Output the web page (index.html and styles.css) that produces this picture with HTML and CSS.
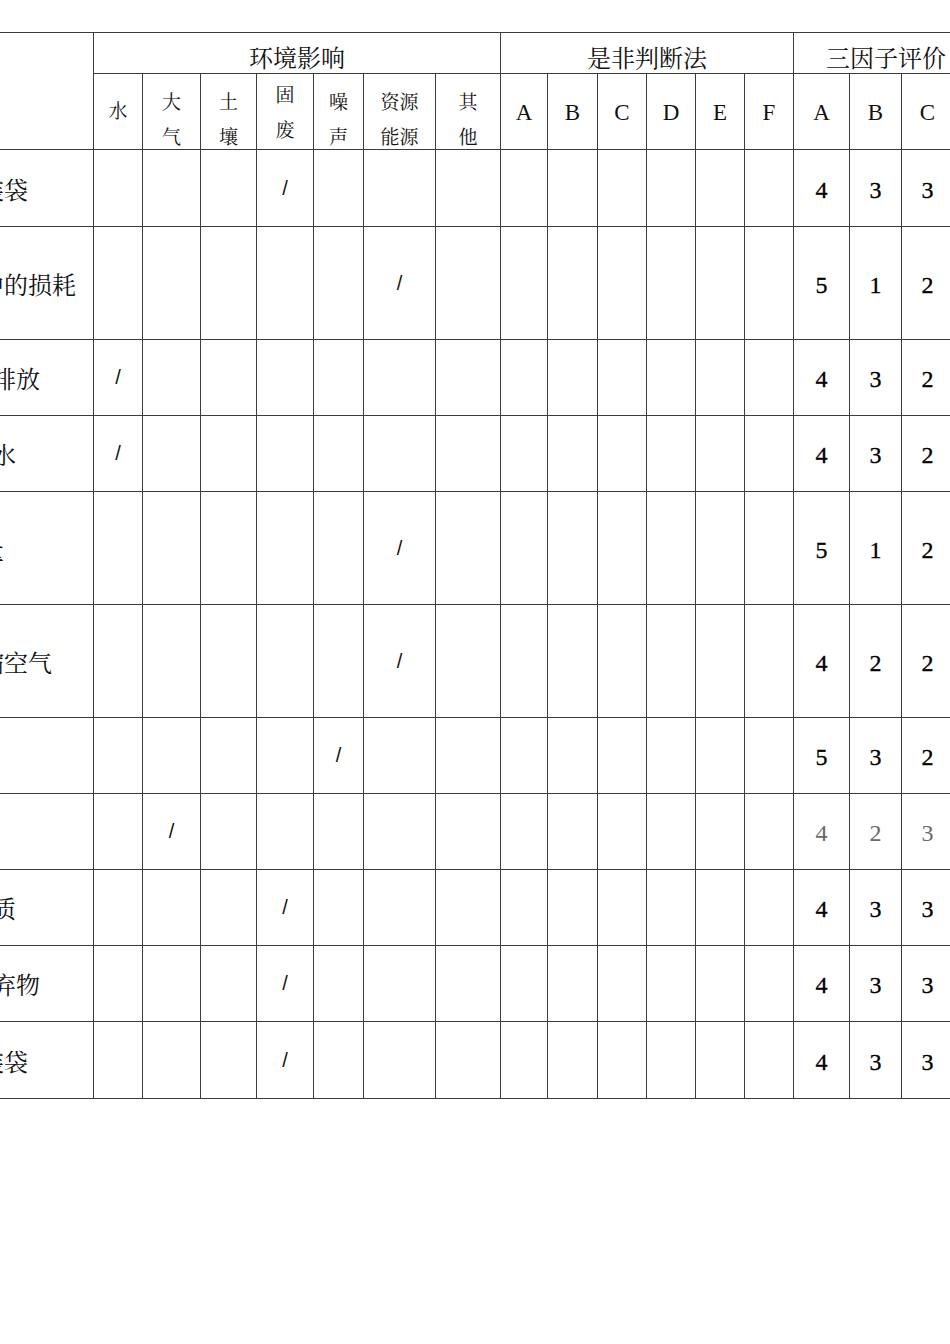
FILE: index.html
```html
<!DOCTYPE html>
<html lang="zh-CN">
<head>
<meta charset="utf-8">
<title>环境因素评价表</title>
<link rel="stylesheet" href="styles.css">
</head>
<body>
<div class="page">
  <div class="sheet">
    <div class="c corner"></div>
    <div class="c h1 span-env">环境影响</div>
    <div class="c h1 span-yn">是非判断法</div>
    <div class="c h1 span-tri">三因子评价</div>

    <div class="c h2">水</div>
    <div class="c h2 two">大<br>气</div>
    <div class="c h2 two">土<br>壤</div>
    <div class="c h2 two up">固<br>废</div>
    <div class="c h2 two">噪<br>声</div>
    <div class="c h2 two">资源<br>能源</div>
    <div class="c h2 two">其<br>他</div>
    <div class="c h2 lat">A</div>
    <div class="c h2 lat">B</div>
    <div class="c h2 lat">C</div>
    <div class="c h2 lat">D</div>
    <div class="c h2 lat">E</div>
    <div class="c h2 lat">F</div>
    <div class="c h2 lat">A</div>
    <div class="c h2 lat">B</div>
    <div class="c h2 lat">C</div>
    <div class="c h2"></div>

    <!-- row 1 -->
    <div class="c name">塑料包装袋</div>
    <div class="c"></div><div class="c"></div><div class="c"></div><div class="c mk">/</div><div class="c"></div><div class="c"></div><div class="c"></div>
    <div class="c"></div><div class="c"></div><div class="c"></div><div class="c"></div><div class="c"></div><div class="c"></div>
    <div class="c num">4</div><div class="c num">3</div><div class="c num">3</div><div class="c"></div>

    <!-- row 2 -->
    <div class="c name">原材料运输中的损耗</div>
    <div class="c"></div><div class="c"></div><div class="c"></div><div class="c"></div><div class="c"></div><div class="c mk">/</div><div class="c"></div>
    <div class="c"></div><div class="c"></div><div class="c"></div><div class="c"></div><div class="c"></div><div class="c"></div>
    <div class="c num">5</div><div class="c num">1</div><div class="c num">2</div><div class="c"></div>

    <!-- row 3 -->
    <div class="c name">生产废水排放</div>
    <div class="c mk">/</div><div class="c"></div><div class="c"></div><div class="c"></div><div class="c"></div><div class="c"></div><div class="c"></div>
    <div class="c"></div><div class="c"></div><div class="c"></div><div class="c"></div><div class="c"></div><div class="c"></div>
    <div class="c num">4</div><div class="c num">3</div><div class="c num">2</div><div class="c"></div>

    <!-- row 4 -->
    <div class="c name">生活污水</div>
    <div class="c mk">/</div><div class="c"></div><div class="c"></div><div class="c"></div><div class="c"></div><div class="c"></div><div class="c"></div>
    <div class="c"></div><div class="c"></div><div class="c"></div><div class="c"></div><div class="c"></div><div class="c"></div>
    <div class="c num">4</div><div class="c num">3</div><div class="c num">2</div><div class="c"></div>

    <!-- row 5 -->
    <div class="c name">用电量</div>
    <div class="c"></div><div class="c"></div><div class="c"></div><div class="c"></div><div class="c"></div><div class="c mk">/</div><div class="c"></div>
    <div class="c"></div><div class="c"></div><div class="c"></div><div class="c"></div><div class="c"></div><div class="c"></div>
    <div class="c num">5</div><div class="c num">1</div><div class="c num">2</div><div class="c"></div>

    <!-- row 6 -->
    <div class="c name">生产用压缩空气</div>
    <div class="c"></div><div class="c"></div><div class="c"></div><div class="c"></div><div class="c"></div><div class="c mk">/</div><div class="c"></div>
    <div class="c"></div><div class="c"></div><div class="c"></div><div class="c"></div><div class="c"></div><div class="c"></div>
    <div class="c num">4</div><div class="c num">2</div><div class="c num">2</div><div class="c"></div>

    <!-- row 7 -->
    <div class="c name">噪声</div>
    <div class="c"></div><div class="c"></div><div class="c"></div><div class="c"></div><div class="c mk">/</div><div class="c"></div><div class="c"></div>
    <div class="c"></div><div class="c"></div><div class="c"></div><div class="c"></div><div class="c"></div><div class="c"></div>
    <div class="c num">5</div><div class="c num">3</div><div class="c num">2</div><div class="c"></div>

    <!-- row 8 -->
    <div class="c name">废气</div>
    <div class="c"></div><div class="c mk">/</div><div class="c"></div><div class="c"></div><div class="c"></div><div class="c"></div><div class="c"></div>
    <div class="c"></div><div class="c"></div><div class="c"></div><div class="c"></div><div class="c"></div><div class="c"></div>
    <div class="c num faint">4</div><div class="c num faint">2</div><div class="c num faint">3</div><div class="c"></div>

    <!-- row 9 -->
    <div class="c name">化学物质</div>
    <div class="c"></div><div class="c"></div><div class="c"></div><div class="c mk">/</div><div class="c"></div><div class="c"></div><div class="c"></div>
    <div class="c"></div><div class="c"></div><div class="c"></div><div class="c"></div><div class="c"></div><div class="c"></div>
    <div class="c num">4</div><div class="c num">3</div><div class="c num">3</div><div class="c"></div>

    <!-- row 10 -->
    <div class="c name">办公室废弃物</div>
    <div class="c"></div><div class="c"></div><div class="c"></div><div class="c mk">/</div><div class="c"></div><div class="c"></div><div class="c"></div>
    <div class="c"></div><div class="c"></div><div class="c"></div><div class="c"></div><div class="c"></div><div class="c"></div>
    <div class="c num">4</div><div class="c num">3</div><div class="c num">3</div><div class="c"></div>

    <!-- row 11 -->
    <div class="c name">纸质包装袋</div>
    <div class="c"></div><div class="c"></div><div class="c"></div><div class="c mk">/</div><div class="c"></div><div class="c"></div><div class="c"></div>
    <div class="c"></div><div class="c"></div><div class="c"></div><div class="c"></div><div class="c"></div><div class="c"></div>
    <div class="c num">4</div><div class="c num">3</div><div class="c num">3</div><div class="c"></div>
  </div>
</div>
</body>
</html>
```

FILE: styles.css
```css
html, body {
  margin: 0;
  padding: 0;
  background: #ffffff;
}

.page {
  width: 950px;
  height: 1344px;
  overflow: hidden;
  background: #ffffff;
  font-family: "Liberation Serif", "Noto Serif CJK SC", "Noto Sans CJK SC", serif;
  color: #111111;
}

.sheet {
  display: grid;
  width: max-content;
  margin-top: 32px;
  margin-left: -158px;
  border: 1px solid #3c3c3c;
  background: #3c3c3c;
  gap: 1px;
  grid-template-columns: 250px 48px 57px 55px 56px 49px 71px 64px 46px 49px 48px 48px 48px 48px 55px 51px 51px 24px;
  grid-template-rows: 40px 75px 76px 112px 75px 75px 112px 112px 75px 75px 75px 75px 76px;
}

.c {
  background: #ffffff;
  display: flex;
  align-items: center;
  justify-content: center;
  overflow: hidden;
  white-space: nowrap;
}

.corner {
  grid-row: 1 / 3;
}

.h1 {
  font-size: 24px;
  line-height: 26px;
  padding-top: 11px;
  box-sizing: border-box;
}

.span-env { grid-column: 2 / 9; }
.span-yn { grid-column: 9 / 15; }
.span-tri { grid-column: 15 / 19; }

.h2 {
  font-size: 19px;
  line-height: 35px;
  text-align: center;
}

.h2.two {
  align-items: flex-start;
  padding-top: 11px;
  box-sizing: border-box;
}

.h2.two.up {
  padding-top: 4px;
}

.h2.lat {
  font-size: 23px;
  padding-top: 2px;
  box-sizing: border-box;
}

.name {
  font-size: 24px;
}

.mk {
  font-family: "Liberation Sans", "DejaVu Sans", sans-serif;
  font-size: 20px;
  color: #111111;
}

.num {
  font-size: 24px;
  color: #000000;
  padding-top: 4px;
  box-sizing: border-box;
  -webkit-text-stroke: 0.3px #000000;
}

.num.faint {
  color: #6a6a6a;
  -webkit-text-stroke: 0;
}
```
